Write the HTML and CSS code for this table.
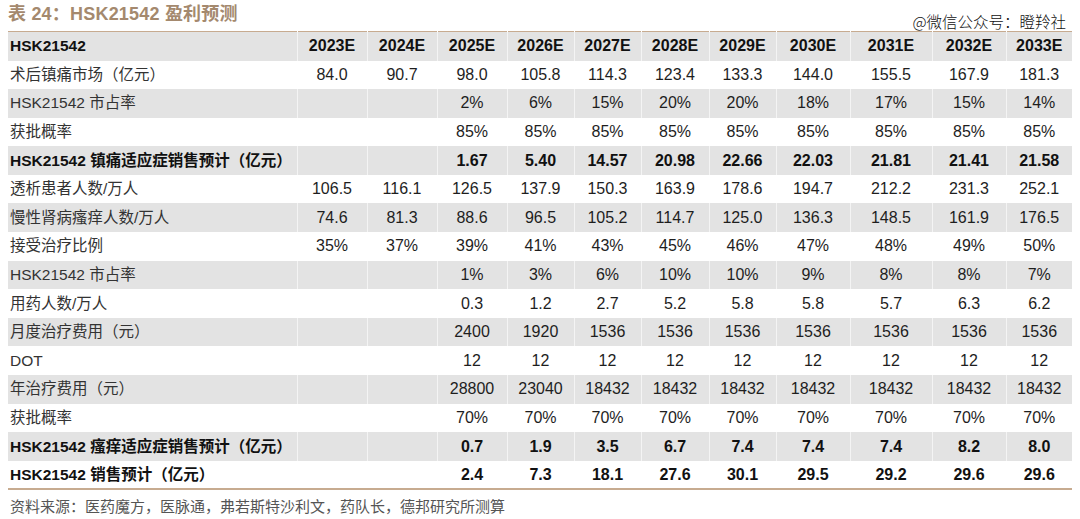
FILE: index.html
```html
<!DOCTYPE html>
<html lang="zh">
<head>
<meta charset="utf-8">
<link rel="stylesheet" href="styles.css">
</head>
<body>
<div class="page">
  <div class="top">
    <div class="title">表 24：HSK21542 盈利预测</div>
    <div class="mark">@微信公众号：瞪羚社</div>
  </div>
  <table class="grid">
    <colgroup>
      <col class="c-label"><col class="c70"><col class="c70"><col class="c70"><col class="c67"><col class="c67"><col class="c68"><col class="c67"><col class="c74"><col class="c82"><col class="c74"><col class="c66">
    </colgroup>
    <tr class="head grey">
      <td class="lab">HSK21542</td><td>2023E</td><td>2024E</td><td>2025E</td><td>2026E</td><td>2027E</td><td>2028E</td><td>2029E</td><td>2030E</td><td>2031E</td><td>2032E</td><td>2033E</td>
    </tr>
    <tr>
      <td class="lab">术后镇痛市场（亿元）</td><td>84.0</td><td>90.7</td><td>98.0</td><td>105.8</td><td>114.3</td><td>123.4</td><td>133.3</td><td>144.0</td><td>155.5</td><td>167.9</td><td>181.3</td>
    </tr>
    <tr class="grey">
      <td class="lab">HSK21542 市占率</td><td></td><td></td><td>2%</td><td>6%</td><td>15%</td><td>20%</td><td>20%</td><td>18%</td><td>17%</td><td>15%</td><td>14%</td>
    </tr>
    <tr>
      <td class="lab">获批概率</td><td></td><td></td><td>85%</td><td>85%</td><td>85%</td><td>85%</td><td>85%</td><td>85%</td><td>85%</td><td>85%</td><td>85%</td>
    </tr>
    <tr class="grey bold">
      <td class="lab">HSK21542 镇痛适应症销售预计（亿元）</td><td></td><td></td><td>1.67</td><td>5.40</td><td>14.57</td><td>20.98</td><td>22.66</td><td>22.03</td><td>21.81</td><td>21.41</td><td>21.58</td>
    </tr>
    <tr>
      <td class="lab">透析患者人数/万人</td><td>106.5</td><td>116.1</td><td>126.5</td><td>137.9</td><td>150.3</td><td>163.9</td><td>178.6</td><td>194.7</td><td>212.2</td><td>231.3</td><td>252.1</td>
    </tr>
    <tr class="grey">
      <td class="lab">慢性肾病瘙痒人数/万人</td><td>74.6</td><td>81.3</td><td>88.6</td><td>96.5</td><td>105.2</td><td>114.7</td><td>125.0</td><td>136.3</td><td>148.5</td><td>161.9</td><td>176.5</td>
    </tr>
    <tr>
      <td class="lab">接受治疗比例</td><td>35%</td><td>37%</td><td>39%</td><td>41%</td><td>43%</td><td>45%</td><td>46%</td><td>47%</td><td>48%</td><td>49%</td><td>50%</td>
    </tr>
    <tr class="grey">
      <td class="lab">HSK21542 市占率</td><td></td><td></td><td>1%</td><td>3%</td><td>6%</td><td>10%</td><td>10%</td><td>9%</td><td>8%</td><td>8%</td><td>7%</td>
    </tr>
    <tr>
      <td class="lab">用药人数/万人</td><td></td><td></td><td>0.3</td><td>1.2</td><td>2.7</td><td>5.2</td><td>5.8</td><td>5.8</td><td>5.7</td><td>6.3</td><td>6.2</td>
    </tr>
    <tr class="grey">
      <td class="lab">月度治疗费用（元）</td><td></td><td></td><td>2400</td><td>1920</td><td>1536</td><td>1536</td><td>1536</td><td>1536</td><td>1536</td><td>1536</td><td>1536</td>
    </tr>
    <tr>
      <td class="lab">DOT</td><td></td><td></td><td>12</td><td>12</td><td>12</td><td>12</td><td>12</td><td>12</td><td>12</td><td>12</td><td>12</td>
    </tr>
    <tr class="grey">
      <td class="lab">年治疗费用（元）</td><td></td><td></td><td>28800</td><td>23040</td><td>18432</td><td>18432</td><td>18432</td><td>18432</td><td>18432</td><td>18432</td><td>18432</td>
    </tr>
    <tr>
      <td class="lab">获批概率</td><td></td><td></td><td>70%</td><td>70%</td><td>70%</td><td>70%</td><td>70%</td><td>70%</td><td>70%</td><td>70%</td><td>70%</td>
    </tr>
    <tr class="grey bold">
      <td class="lab">HSK21542 瘙痒适应症销售预计（亿元）</td><td></td><td></td><td>0.7</td><td>1.9</td><td>3.5</td><td>6.7</td><td>7.4</td><td>7.4</td><td>7.4</td><td>8.2</td><td>8.0</td>
    </tr>
    <tr class="bold">
      <td class="lab">HSK21542 销售预计（亿元）</td><td></td><td></td><td>2.4</td><td>7.3</td><td>18.1</td><td>27.6</td><td>30.1</td><td>29.5</td><td>29.2</td><td>29.6</td><td>29.6</td>
    </tr>
  </table>
  <div class="source">资料来源：医药魔方，医脉通，弗若斯特沙利文，药队长，德邦研究所测算</div>
</div>
</body>
</html>
```

FILE: styles.css
```css
html, body {
  margin: 0;
  padding: 0;
  background: #ffffff;
}

.page {
  width: 1064px;
  padding: 0 8px;
  font-family: "Liberation Sans", "Noto Sans CJK SC", Arial, sans-serif;
  color: #222;
}

.top {
  display: flex;
  justify-content: space-between;
  align-items: flex-start;
  height: 31px;
}

.title {
  font-family: "Liberation Sans", "Noto Sans CJK SC", sans-serif;
  font-weight: bold;
  font-size: 18px;
  line-height: 28px;
  color: #a4896e;
  letter-spacing: 0.2px;
}

.mark {
  font-family: "Noto Sans CJK SC", sans-serif;
  font-weight: 300;
  font-size: 15.5px;
  line-height: 18px;
  margin-top: 12px;
  margin-right: 6px;
  color: #111;
  background: #fff;
  position: relative;
  z-index: 1;
}

.grid {
  width: 1064px;
  table-layout: fixed;
  border-collapse: collapse;
  border-top: 1.5px solid #c7ab90;
  border-bottom: 2px solid #c7ab90;
}

.c-label { width: 289px; }
.c70 { width: 70px; }
.c67 { width: 67px; }
.c68 { width: 68px; }
.c74 { width: 74px; }
.c82 { width: 82px; }
.c66 { width: 66px; }

.grid tr {
  height: 28.6px;
}

.grid tr.head {
  height: 29px;
}

.grid td {
  padding: 0;
  text-align: center;
  font-size: 16px;
  line-height: 18px;
  color: #1e1e1e;
  white-space: nowrap;
  border-left: 1px solid rgba(255, 255, 255, 0.6);
}

.grid td.lab {
  text-align: left;
  padding-left: 2px;
  font-size: 15.5px;
  color: #333;
  font-family: "Liberation Sans", "Noto Sans CJK SC", sans-serif;
  border-left: none;
}

.grey td {
  background: #e3e3e3;
}

.head td,
.bold td {
  font-weight: bold;
  color: #111;
}

.head td.lab,
.bold td.lab {
  color: #111;
}

.source {
  margin-top: 7px;
  font-family: "Noto Sans CJK SC", sans-serif;
  font-size: 15px;
  line-height: 18px;
  color: #555;
  padding-left: 2px;
}
```
